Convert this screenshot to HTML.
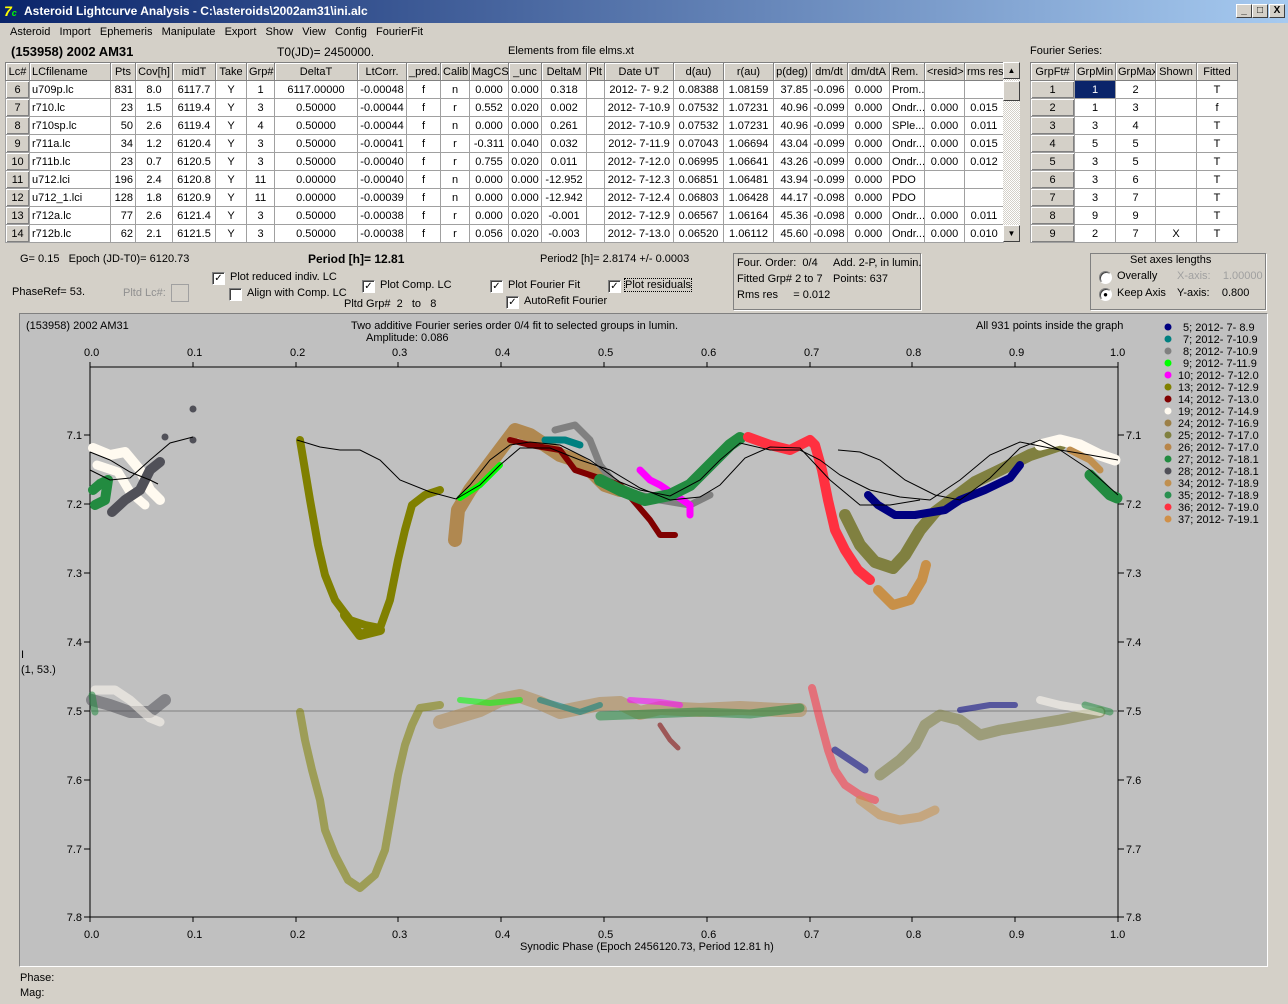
<!DOCTYPE html>
<html><head><meta charset="utf-8"><style>
*{margin:0;padding:0;box-sizing:border-box}
body{width:1288px;height:1004px;background:#d4d0c8;font-family:"Liberation Sans",sans-serif;font-size:11px;color:#000;position:relative;overflow:hidden}
.a{position:absolute;white-space:nowrap}
#title{left:0;top:0;width:1288px;height:23px;background:linear-gradient(90deg,#0a246a,#a6caf0);color:#fff;font-weight:bold;font-size:12px;line-height:23px;padding-left:24px}
.wb{position:absolute;top:4px;width:16px;height:14px;background:#d4d0c8;border:1px solid;border-color:#fff #404040 #404040 #fff;font-size:10px;font-weight:bold;text-align:center;line-height:12px;color:#000}
table{border-collapse:collapse;table-layout:fixed;position:absolute}
td{border:1px solid #a0a0a0;height:18px;padding:0 2px;white-space:nowrap;overflow:hidden;background:#fff;text-align:center;font-size:11px}
tr.h td{background:#d4d0c8;border:1px solid #808080;box-shadow:inset 1px 1px #fff}
td.b{background:#d4d0c8;box-shadow:inset 1px 1px #fff,inset -1px -1px #808080}
td.l{text-align:left}
td.r{text-align:right}
.cb{position:absolute;width:13px;height:13px;background:#fff;border:1px solid;border-color:#808080 #fff #fff #808080;box-shadow:inset 1px 1px #404040;font-size:10px;line-height:11px;text-align:center}
.grp{position:absolute;border:1px solid #808080;box-shadow:1px 1px #fff}
</style></head><body>
<div class="a" id="title">Asteroid Lightcurve Analysis - C:\asteroids\2002am31\ini.alc</div>
<div class="a" style="left:4px;top:3px;width:17px;height:17px;color:#ff0;font-weight:bold;font-size:14px;font-style:italic">7<span style="color:#0f0;font-size:9px">c</span></div>
<div class="wb" style="left:1236px">_</div><div class="wb" style="left:1252px">&#9633;</div><div class="wb" style="left:1269px">X</div>
<div class="a" style="left:10px;top:26px">Asteroid&nbsp;&nbsp;&nbsp;Import&nbsp;&nbsp;&nbsp;Ephemeris&nbsp;&nbsp;&nbsp;Manipulate&nbsp;&nbsp;&nbsp;Export&nbsp;&nbsp;&nbsp;Show&nbsp;&nbsp;&nbsp;View&nbsp;&nbsp;&nbsp;Config&nbsp;&nbsp;&nbsp;FourierFit</div>
<div class="a" style="left:11px;top:44px;font-weight:bold;font-size:13px">(153958) 2002 AM31</div>
<div class="a" style="left:277px;top:45px;font-size:12px">T0(JD)= 2450000.</div>
<div class="a" style="left:508px;top:45px">Elements from file elms.xt</div>
<div class="a" style="left:1030px;top:45px">Fourier Series:</div>

<table style="left:5px;top:62px;width:998px">
<colgroup><col style="width:24px"><col style="width:81px"><col style="width:25px"><col style="width:37px"><col style="width:43px"><col style="width:31px"><col style="width:28px"><col style="width:83px"><col style="width:49px"><col style="width:34px"><col style="width:29px"><col style="width:39px"><col style="width:33px"><col style="width:45px"><col style="width:18px"><col style="width:69px"><col style="width:50px"><col style="width:50px"><col style="width:37px"><col style="width:37px"><col style="width:42px"><col style="width:35px"><col style="width:40px"><col style="width:39px"></colgroup>
<tr class="h"><td>Lc#</td><td class="l">LCfilename</td><td>Pts</td><td>Cov[h]</td><td>midT</td><td>Take</td><td>Grp#</td><td>DeltaT</td><td>LtCorr.</td><td>_pred.</td><td>Calib.</td><td>MagCS</td><td>_unc</td><td>DeltaM</td><td>Plt</td><td>Date UT</td><td>d(au)</td><td>r(au)</td><td>p(deg)</td><td>dm/dt</td><td>dm/dtA</td><td class="l">Rem.</td><td>&lt;resid&gt;</td><td>rms res</td></tr>
<tr><td class="b">6</td><td class="l">u709p.lc</td><td class="r">831</td><td>8.0</td><td>6117.7</td><td>Y</td><td>1</td><td>6117.00000</td><td>-0.00048</td><td>f</td><td>n</td><td>0.000</td><td>0.000</td><td>0.318</td><td></td><td>2012- 7- 9.2</td><td>0.08388</td><td>1.08159</td><td class="r">37.85</td><td>-0.096</td><td>0.000</td><td class="l">Prom...</td><td></td><td></td></tr>
<tr><td class="b">7</td><td class="l">r710.lc</td><td class="r">23</td><td>1.5</td><td>6119.4</td><td>Y</td><td>3</td><td>0.50000</td><td>-0.00044</td><td>f</td><td>r</td><td>0.552</td><td>0.020</td><td>0.002</td><td></td><td>2012- 7-10.9</td><td>0.07532</td><td>1.07231</td><td class="r">40.96</td><td>-0.099</td><td>0.000</td><td class="l">Ondr...</td><td>0.000</td><td>0.015</td></tr>
<tr><td class="b">8</td><td class="l">r710sp.lc</td><td class="r">50</td><td>2.6</td><td>6119.4</td><td>Y</td><td>4</td><td>0.50000</td><td>-0.00044</td><td>f</td><td>n</td><td>0.000</td><td>0.000</td><td>0.261</td><td></td><td>2012- 7-10.9</td><td>0.07532</td><td>1.07231</td><td class="r">40.96</td><td>-0.099</td><td>0.000</td><td class="l">SPle...</td><td>0.000</td><td>0.011</td></tr>
<tr><td class="b">9</td><td class="l">r711a.lc</td><td class="r">34</td><td>1.2</td><td>6120.4</td><td>Y</td><td>3</td><td>0.50000</td><td>-0.00041</td><td>f</td><td>r</td><td>-0.311</td><td>0.040</td><td>0.032</td><td></td><td>2012- 7-11.9</td><td>0.07043</td><td>1.06694</td><td class="r">43.04</td><td>-0.099</td><td>0.000</td><td class="l">Ondr...</td><td>0.000</td><td>0.015</td></tr>
<tr><td class="b">10</td><td class="l">r711b.lc</td><td class="r">23</td><td>0.7</td><td>6120.5</td><td>Y</td><td>3</td><td>0.50000</td><td>-0.00040</td><td>f</td><td>r</td><td>0.755</td><td>0.020</td><td>0.011</td><td></td><td>2012- 7-12.0</td><td>0.06995</td><td>1.06641</td><td class="r">43.26</td><td>-0.099</td><td>0.000</td><td class="l">Ondr...</td><td>0.000</td><td>0.012</td></tr>
<tr><td class="b">11</td><td class="l">u712.lci</td><td class="r">196</td><td>2.4</td><td>6120.8</td><td>Y</td><td>11</td><td>0.00000</td><td>-0.00040</td><td>f</td><td>n</td><td>0.000</td><td>0.000</td><td>-12.952</td><td></td><td>2012- 7-12.3</td><td>0.06851</td><td>1.06481</td><td class="r">43.94</td><td>-0.099</td><td>0.000</td><td class="l">PDO</td><td></td><td></td></tr>
<tr><td class="b">12</td><td class="l">u712_1.lci</td><td class="r">128</td><td>1.8</td><td>6120.9</td><td>Y</td><td>11</td><td>0.00000</td><td>-0.00039</td><td>f</td><td>n</td><td>0.000</td><td>0.000</td><td>-12.942</td><td></td><td>2012- 7-12.4</td><td>0.06803</td><td>1.06428</td><td class="r">44.17</td><td>-0.098</td><td>0.000</td><td class="l">PDO</td><td></td><td></td></tr>
<tr><td class="b">13</td><td class="l">r712a.lc</td><td class="r">77</td><td>2.6</td><td>6121.4</td><td>Y</td><td>3</td><td>0.50000</td><td>-0.00038</td><td>f</td><td>r</td><td>0.000</td><td>0.020</td><td>-0.001</td><td></td><td>2012- 7-12.9</td><td>0.06567</td><td>1.06164</td><td class="r">45.36</td><td>-0.098</td><td>0.000</td><td class="l">Ondr...</td><td>0.000</td><td>0.011</td></tr>
<tr><td class="b">14</td><td class="l">r712b.lc</td><td class="r">62</td><td>2.1</td><td>6121.5</td><td>Y</td><td>3</td><td>0.50000</td><td>-0.00038</td><td>f</td><td>r</td><td>0.056</td><td>0.020</td><td>-0.003</td><td></td><td>2012- 7-13.0</td><td>0.06520</td><td>1.06112</td><td class="r">45.60</td><td>-0.098</td><td>0.000</td><td class="l">Ondr...</td><td>0.000</td><td>0.010</td></tr>
</table>
<div class="a" style="left:1003px;top:62px;width:17px;height:180px;background:#e8e6e0;background-image:repeating-conic-gradient(#d4d0c8 0 25%,#fff 0 50%);background-size:2px 2px"></div>
<div class="a" style="left:1003px;top:62px;width:17px;height:17px;background:#d4d0c8;border:1px solid;border-color:#fff #404040 #404040 #fff;font-size:8px;text-align:center;line-height:15px">&#9650;</div>
<div class="a" style="left:1003px;top:81px;width:17px;height:20px;background:#d4d0c8;border:1px solid;border-color:#fff #404040 #404040 #fff"></div>
<div class="a" style="left:1003px;top:225px;width:17px;height:17px;background:#d4d0c8;border:1px solid;border-color:#fff #404040 #404040 #fff;font-size:8px;text-align:center;line-height:15px">&#9660;</div>

<table style="left:1030px;top:62px;width:207px">
<colgroup><col style="width:44px"><col style="width:41px"><col style="width:40px"><col style="width:41px"><col style="width:41px"></colgroup>
<tr class="h"><td>GrpFt#</td><td>GrpMin</td><td>GrpMax</td><td>Shown</td><td>Fitted</td></tr>
<tr><td class="b">1</td><td style="background:#0a246a;color:#fff">1</td><td>2</td><td></td><td>T</td></tr>
<tr><td class="b">2</td><td>1</td><td>3</td><td></td><td>f</td></tr>
<tr><td class="b">3</td><td>3</td><td>4</td><td></td><td>T</td></tr>
<tr><td class="b">4</td><td>5</td><td>5</td><td></td><td>T</td></tr>
<tr><td class="b">5</td><td>3</td><td>5</td><td></td><td>T</td></tr>
<tr><td class="b">6</td><td>3</td><td>6</td><td></td><td>T</td></tr>
<tr><td class="b">7</td><td>3</td><td>7</td><td></td><td>T</td></tr>
<tr><td class="b">8</td><td>9</td><td>9</td><td></td><td>T</td></tr>
<tr><td class="b">9</td><td>2</td><td>7</td><td>X</td><td>T</td></tr>
</table>

<div class="a" style="left:20px;top:253px">G= 0.15&nbsp;&nbsp;&nbsp;Epoch (JD-T0)= 6120.73</div>
<div class="a" style="left:308px;top:252px;font-weight:bold;font-size:12px">Period [h]= 12.81</div>
<div class="a" style="left:540px;top:253px">Period2 [h]= 2.8174 +/- 0.0003</div>
<div class="a" style="left:12px;top:286px">PhaseRef= 53.</div>
<div class="a" style="left:123px;top:287px;color:#909090">Pltd Lc#:</div>
<div class="a" style="left:171px;top:284px;width:18px;height:18px;border:1px solid #a0a0a0;background:#d4d0c8"></div>
<div class="cb" style="left:212px;top:272px">&#10003;</div><div class="a" style="left:230px;top:271px">Plot reduced indiv. LC</div>
<div class="cb" style="left:229px;top:288px"></div><div class="a" style="left:247px;top:287px">Align with Comp. LC</div>
<div class="cb" style="left:362px;top:280px">&#10003;</div><div class="a" style="left:380px;top:279px">Plot Comp. LC</div>
<div class="a" style="left:344px;top:298px">Pltd Grp#&nbsp;&nbsp;2&nbsp;&nbsp;&nbsp;to&nbsp;&nbsp;&nbsp;8</div>
<div class="cb" style="left:490px;top:280px">&#10003;</div><div class="a" style="left:508px;top:279px">Plot Fourier Fit</div>
<div class="cb" style="left:506px;top:296px">&#10003;</div><div class="a" style="left:524px;top:295px">AutoRefit Fourier</div>
<div class="cb" style="left:608px;top:280px">&#10003;</div><div class="a" style="left:625px;top:279px;outline:1px dotted #000">Plot residuals</div>

<div class="grp" style="left:733px;top:253px;width:188px;height:57px"></div>
<div class="a" style="left:737px;top:257px">Four. Order:&nbsp;&nbsp;0/4</div><div class="a" style="left:833px;top:257px">Add. 2-P, in lumin.</div>
<div class="a" style="left:737px;top:273px">Fitted Grp# 2 to 7</div><div class="a" style="left:833px;top:273px">Points: 637</div>
<div class="a" style="left:737px;top:289px">Rms res&nbsp;&nbsp;&nbsp;&nbsp;&nbsp;= 0.012</div>
<div class="grp" style="left:1090px;top:253px;width:176px;height:57px"></div>
<div class="a" style="left:1130px;top:254px">Set axes lengths</div>
<div class="cb" style="left:1099px;top:271px;border-radius:7px"></div><div class="a" style="left:1117px;top:270px">Overally</div>
<div class="a" style="left:1177px;top:270px;color:#a0a0a0">X-axis:&nbsp;&nbsp;&nbsp;&nbsp;1.00000</div>
<div class="cb" style="left:1099px;top:288px;border-radius:7px;font-size:8px">&#9679;</div><div class="a" style="left:1117px;top:287px">Keep Axis</div>
<div class="a" style="left:1177px;top:287px">Y-axis:&nbsp;&nbsp;&nbsp;&nbsp;0.800</div>

<div class="a" style="left:19px;top:313px;width:1249px;height:654px;background:#c0c0c0;border-top:1px solid #808080;border-left:1px solid #808080;border-bottom:1px solid #fff;border-right:1px solid #fff"></div>
<div class="a" style="left:26px;top:320px">(153958) 2002 AM31</div>
<div class="a" style="left:351px;top:320px">Two additive Fourier series order 0/4 fit to selected groups in lumin.</div>
<div class="a" style="left:366px;top:332px">Amplitude: 0.086</div>
<div class="a" style="left:976px;top:320px">All 931 points inside the graph</div>
<div class="a" style="left:21px;top:649px">I</div>
<div class="a" style="left:21px;top:664px">(1, 53.)</div>
<div class="a" style="left:520px;top:941px">Synodic Phase (Epoch 2456120.73, Period 12.81 h)</div>
<div class="a" style="left:20px;top:972px">Phase:</div>
<div class="a" style="left:20px;top:987px">Mag:</div>

<svg class="a" style="left:0;top:0" width="1288" height="1004" font-family="Liberation Sans,sans-serif" font-size="11">
<g stroke="#000" fill="none">
<path d="M90,367H1118V917H90Z"/>
<path d="M90,367v-5M193,367v-5M296,367v-5M398,367v-5M501,367v-5M604,367v-5M707,367v-5M810,367v-5M912,367v-5M1015,367v-5M1118,367v-5"/>
<path d="M90,917v5M193,917v5M296,917v5M398,917v5M501,917v5M604,917v5M707,917v5M810,917v5M912,917v5M1015,917v5M1118,917v5"/>
<path d="M90,435h-6M90,504h-6M90,573h-6M90,642h-6M90,711h-6M90,780h-6M90,849h-6M90,917h-6"/>
<path d="M1118,435h6M1118,504h6M1118,573h6M1118,642h6M1118,711h6M1118,780h6M1118,849h6M1118,917h6"/>
</g>
<path d="M90,711H1118" stroke="#808080"/>
<g fill="#000">
<text x="84" y="356">0.0</text><text x="187" y="356">0.1</text><text x="290" y="356">0.2</text><text x="392" y="356">0.3</text><text x="495" y="356">0.4</text><text x="598" y="356">0.5</text><text x="701" y="356">0.6</text><text x="804" y="356">0.7</text><text x="906" y="356">0.8</text><text x="1009" y="356">0.9</text><text x="1110" y="356">1.0</text>
<text x="84" y="938">0.0</text><text x="187" y="938">0.1</text><text x="290" y="938">0.2</text><text x="392" y="938">0.3</text><text x="495" y="938">0.4</text><text x="598" y="938">0.5</text><text x="701" y="938">0.6</text><text x="804" y="938">0.7</text><text x="906" y="938">0.8</text><text x="1009" y="938">0.9</text><text x="1110" y="938">1.0</text>
<g text-anchor="end"><text x="82" y="439">7.1</text><text x="82" y="508">7.2</text><text x="82" y="577">7.3</text><text x="82" y="646">7.4</text><text x="82" y="715">7.5</text><text x="82" y="784">7.6</text><text x="82" y="853">7.7</text><text x="82" y="921">7.8</text></g>
<text x="1126" y="439">7.1</text><text x="1126" y="508">7.2</text><text x="1126" y="577">7.3</text><text x="1126" y="646">7.4</text><text x="1126" y="715">7.5</text><text x="1126" y="784">7.6</text><text x="1126" y="853">7.7</text><text x="1126" y="921">7.8</text>
</g>
<!-- residuals -->
<g fill="none" stroke-linecap="round" stroke-linejoin="round" stroke-opacity="0.55">
<polyline points="92,700 110,705 130,712 150,712 165,700" stroke="#505058" stroke-width="12"/>
<polyline points="95,690 115,690 130,700 150,718 160,722" stroke="#fffaf0" stroke-width="9"/>
<polyline points="92,695 95,712" stroke="#228b40" stroke-width="7"/>
<polyline points="300,712 305,740 312,770 320,800 325,830 335,855 348,880 360,888 375,875 385,850 392,810 398,775 405,745 412,725 420,708 440,705" stroke="#808000" stroke-width="8"/>
<polyline points="440,722 460,716 480,710 500,700 520,696 540,703 560,712 580,708 600,704 620,703 640,713 660,708 700,710 740,708 780,710 800,710" stroke="#b08850" stroke-width="14"/>
<polyline points="460,700 490,703 520,700" stroke="#00ff00" stroke-width="6"/>
<polyline points="540,700 580,712 600,705" stroke="#008080" stroke-width="6"/>
<polyline points="630,700 660,702 680,705" stroke="#ff00ff" stroke-width="6"/>
<polyline points="600,716 650,714 700,712 750,714 800,708" stroke="#228b40" stroke-width="9"/>
<polyline points="660,725 670,740 678,748" stroke="#800000" stroke-width="5"/>
<polyline points="812,688 820,720 828,750 835,770 845,785 860,795 875,800" stroke="#ff3040" stroke-width="8"/>
<polyline points="860,800 880,815 900,820 920,817 935,810" stroke="#c89048" stroke-width="9"/>
<polyline points="835,750 850,760 865,770" stroke="#000080" stroke-width="7"/>
<polyline points="880,775 900,760 915,745 925,725 940,715 960,720 980,735 1000,730 1030,725 1060,720 1100,712" stroke="#808040" stroke-width="11"/>
<polyline points="960,710 990,705 1015,705" stroke="#000080" stroke-width="6"/>
<polyline points="1040,700 1060,705 1100,712" stroke="#fffaf0" stroke-width="8"/>
<polyline points="1085,705 1110,712" stroke="#228b40" stroke-width="7"/>
</g>
<!-- reduced LC -->
<g fill="none" stroke-linecap="round" stroke-linejoin="round">
<polyline points="93,448 110,455 125,452 140,470 150,490 160,500" stroke="#fffaf0" stroke-width="10"/>
<polyline points="97,465 118,472 130,492 145,505" stroke="#fffaf0" stroke-width="9"/>
<polyline points="93,490 100,484 108,480 105,500 95,505" stroke="#228b40" stroke-width="10"/>
<polyline points="112,512 125,500 140,490 150,470 160,462" stroke="#505058" stroke-width="10"/>
<polyline points="300,440 305,470 310,500 318,545 325,575 335,600 350,620 365,625 380,628 390,600 398,560 405,530 412,505 425,495 440,490" stroke="#808000" stroke-width="8"/>
<polyline points="345,615 360,635 380,630" stroke="#808000" stroke-width="10"/>
<polyline points="455,540 458,510 470,490 485,470 500,450 515,430 530,435 545,445 560,455 575,460 590,470 605,485 620,490" stroke="#b08850" stroke-width="14"/>
<polyline points="460,498 480,485 500,465" stroke="#00ff00" stroke-width="6"/>
<polyline points="545,440 565,440 580,445" stroke="#008080" stroke-width="7"/>
<polyline points="555,430 575,425 590,440 600,465 620,490 640,495 660,500 690,505 710,495" stroke="#808080" stroke-width="7"/>
<polyline points="510,440 530,445 560,450 575,470 620,485 650,520 660,535 675,535" stroke="#800000" stroke-width="6"/>
<polyline points="640,470 650,480 660,485 690,505 690,515" stroke="#ff00ff" stroke-width="7"/>
<polyline points="600,480 620,490 645,500 670,495 690,485 710,465 730,445 740,438" stroke="#228b40" stroke-width="12"/>
<polyline points="748,437 770,445 790,450 810,440 815,445 822,470 828,500 835,530 845,550 858,570 870,580" stroke="#ff3040" stroke-width="10"/>
<polyline points="845,515 860,545 875,562 893,568 905,555 920,530 935,512 955,497 975,482 1000,470 1030,455 1060,445" stroke="#808040" stroke-width="12"/>
<polyline points="878,590 893,605 910,600 922,580 926,565" stroke="#c89048" stroke-width="10"/>
<polyline points="868,495 878,505 895,515 915,515 945,510 960,500 985,490 1010,478 1020,465" stroke="#000080" stroke-width="8"/>
<polyline points="1040,445 1060,440 1080,445 1100,455 1115,460" stroke="#fffaf0" stroke-width="11"/>
<polyline points="1070,450 1090,460 1100,470" stroke="#c09050" stroke-width="7"/>
<polyline points="1090,475 1100,485 1110,495 1117,498" stroke="#228b40" stroke-width="11"/>
</g>
<g fill="#505058"><circle cx="193" cy="409" r="3.5"/><circle cx="193" cy="440" r="3.5"/><circle cx="165" cy="437" r="3.5"/></g>
<!-- fit curves -->
<g fill="none" stroke="#000" stroke-width="1">
<polyline points="90,470 110,480 130,478 150,460 170,443 193,437"/>
<polyline points="90,452 110,460 130,472 150,480 158,484"/>
<polyline points="297,440 320,447 340,450 360,450 380,460 400,480 430,492 456,499 470,485 490,460 510,445 530,442 560,445 590,460 620,482 640,490 670,496 700,480 720,460 740,443 770,450 800,450 820,460 840,475 870,490 900,497 930,500 960,480 990,455 1020,442 1060,450 1090,455 1118,460"/>
<polyline points="456,499 480,485 500,465 520,448 550,448 580,460 610,470 640,488 670,500 700,497 720,485 745,458 770,447 800,448 830,480 860,505 890,505 920,500"/>
<polyline points="838,450 860,452 880,460 905,480 935,495 960,500 990,478 1020,448 1040,440 1060,450 1090,470 1118,495"/>
</g>
<!-- legend -->
<g>
<circle cx="1168" cy="327" r="3.5" fill="#000080"/><circle cx="1168" cy="339" r="3.5" fill="#008080"/><circle cx="1168" cy="351" r="3.5" fill="#808080"/><circle cx="1168" cy="363" r="3.5" fill="#00ff00"/><circle cx="1168" cy="375" r="3.5" fill="#ff00ff"/><circle cx="1168" cy="387" r="3.5" fill="#808000"/><circle cx="1168" cy="399" r="3.5" fill="#800000"/><circle cx="1168" cy="411" r="3.5" fill="#fffaf0"/><circle cx="1168" cy="423" r="3.5" fill="#9c8048"/><circle cx="1168" cy="435" r="3.5" fill="#808040"/><circle cx="1168" cy="447" r="3.5" fill="#b8864a"/><circle cx="1168" cy="459" r="3.5" fill="#228b40"/><circle cx="1168" cy="471" r="3.5" fill="#505058"/><circle cx="1168" cy="483" r="3.5" fill="#c09050"/><circle cx="1168" cy="495" r="3.5" fill="#2a9050"/><circle cx="1168" cy="507" r="3.5" fill="#ff3040"/><circle cx="1168" cy="519" r="3.5" fill="#d09048"/>
<g font-size="11" fill="#000">
<text x="1180" y="331">&#160;5; 2012- 7- 8.9</text><text x="1180" y="343">&#160;7; 2012- 7-10.9</text><text x="1180" y="355">&#160;8; 2012- 7-10.9</text><text x="1180" y="367">&#160;9; 2012- 7-11.9</text><text x="1178" y="379">10; 2012- 7-12.0</text><text x="1178" y="391">13; 2012- 7-12.9</text><text x="1178" y="403">14; 2012- 7-13.0</text><text x="1178" y="415">19; 2012- 7-14.9</text><text x="1178" y="427">24; 2012- 7-16.9</text><text x="1178" y="439">25; 2012- 7-17.0</text><text x="1178" y="451">26; 2012- 7-17.0</text><text x="1178" y="463">27; 2012- 7-18.1</text><text x="1178" y="475">28; 2012- 7-18.1</text><text x="1178" y="487">34; 2012- 7-18.9</text><text x="1178" y="499">35; 2012- 7-18.9</text><text x="1178" y="511">36; 2012- 7-19.0</text><text x="1178" y="523">37; 2012- 7-19.1</text>
</g></g>
</svg>
</body></html>
